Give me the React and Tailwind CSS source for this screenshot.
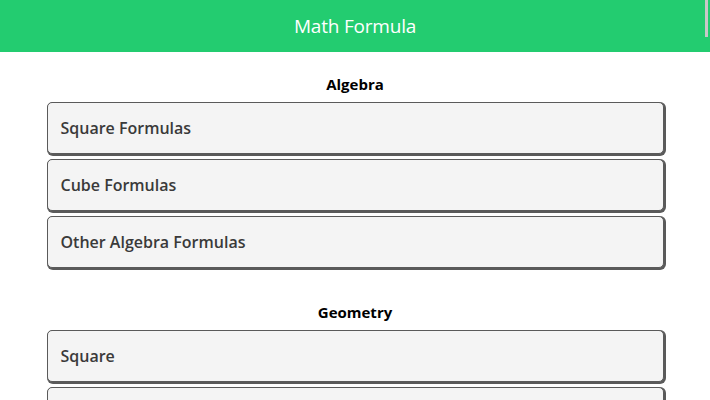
const sections = [
  { title: 'Algebra', items: ['Square Formulas', 'Cube Formulas', 'Other Algebra Formulas'] },
  { title: 'Geometry', items: ['Square', 'Rectangle'] },
]

export default function App() {
  return (
    <div className="relative min-h-screen bg-white font-['Open_Sans',sans-serif]">
      <header className="h-[52px] bg-[#23cc70] flex items-center justify-center">
        <h1 className="text-[19px] text-white leading-none tracking-[-0.2px]">Math Formula</h1>
      </header>
      <div className="absolute top-0 right-[2px] w-[3px] h-[37px] bg-[#c8c8c8]" />

      <main className="w-[617px] mx-auto pt-[22px]">
        {sections.map((section, i) => (
          <section key={section.title} className={i > 0 ? 'mt-[34px]' : ''}>
            <h2 className="text-center text-[15px] font-bold text-black leading-[20px] mb-[8px]">{section.title}</h2>
            <div className="flex flex-col gap-[5px]">
              {section.items.map(item => (
                <button
                  key={item}
                  className="h-[52px] w-full flex items-center px-[13px] bg-[#f4f4f4] border border-[#5a5a5a] rounded-[5px] shadow-[1px_1px_0_1px_#5a5a5a] text-left"
                >
                  <span className="text-[16px] font-semibold text-[#3a3a3a]">{item}</span>
                </button>
              ))}
            </div>
          </section>
        ))}
      </main>
    </div>
  )
}
